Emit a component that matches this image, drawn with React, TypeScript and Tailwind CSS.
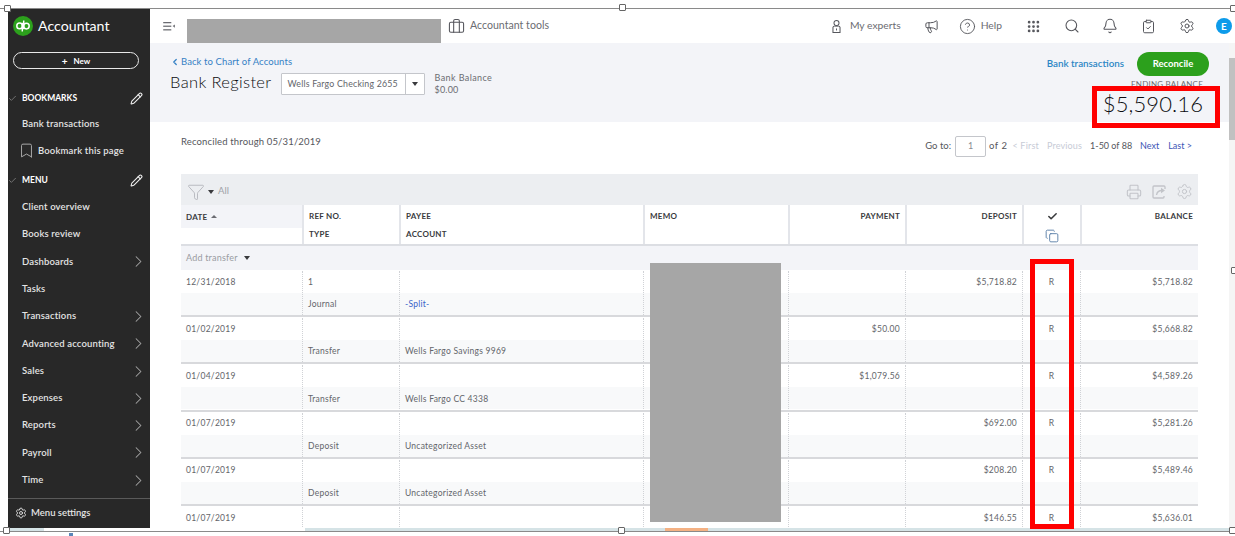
import { Bookmark, Briefcase, ChevronLeft, ChevronRight, CircleHelp, Check, ClipboardCheck, Copy, Bell, Filter, Grip, Megaphone, Pencil, Printer, Search, Settings } from "lucide-react";

const F = "font-['Lato','Noto_Sans',sans-serif]";

function Caret({ className = "" }: { className?: string }) {
  return <span className={`inline-block w-0 h-0 border-x-[3px] border-x-transparent border-t-[4px] ${className}`} />;
}

function Handle({ className }: { className: string }) {
  return <div className={`absolute w-[7px] h-[7px] bg-white border border-[#666] rounded-[1px] ${className}`} />;
}

function NavItem({ label, arrow }: { label: string; arrow?: boolean }) {
  return (
    <div className="h-[27.3px] flex items-center justify-between pl-[14px] pr-[2px] text-[9.5px] font-semibold tracking-[0.15px] text-[#e4e4e4]">
      <span>{label}</span>
      {arrow && <ChevronRight size={19} strokeWidth={1.3} className="text-[#a8a8a8]" />}
    </div>
  );
}

function Section({ label }: { label: string }) {
  return (
    <div className="h-[27px] flex items-center justify-between pr-[7px] text-[8.5px] font-bold text-white">
      <div className="flex items-center">
        <div className="w-[14px] flex justify-start">
          <Check size={9} strokeWidth={2} className="text-[#8a8a8a]" />
        </div>
        <span>{label}</span>
      </div>
      <Pencil size={13} strokeWidth={2} className="text-[#f0f0f0]" />
    </div>
  );
}

const cols = ["w-[121px]", "w-[97px]", "w-[244px]", "w-[145px]", "w-[117px]", "w-[117px]", "w-[58px]", "flex-1"];

function Cell({ i, text, cls = "", line = true }: { i: number; text?: string; cls?: string; line?: boolean }) {
  const align = i === 4 || i === 5 || i === 7 ? "justify-end" : i === 6 ? "justify-center" : "justify-start";
  return (
    <div className={`${cols[i]} shrink-0 h-full flex items-center ${align} px-[5px] ${i > 0 && line ? "border-l border-dotted border-[#d0d2d6]" : ""} ${cls}`}>
      {text}
    </div>
  );
}

type R = { d: string; ref?: string; type?: string; acct?: string; pay?: string; dep?: string; bal: string };

const rows: R[] = [
  { d: "12/31/2018", ref: "1", type: "Journal", acct: "-Split-", dep: "$5,718.82", bal: "$5,718.82" },
  { d: "01/02/2019", type: "Transfer", acct: "Wells Fargo Savings 9969", pay: "$50.00", bal: "$5,668.82" },
  { d: "01/04/2019", type: "Transfer", acct: "Wells Fargo CC 4338", pay: "$1,079.56", bal: "$4,589.26" },
  { d: "01/07/2019", type: "Deposit", acct: "Uncategorized Asset", dep: "$692.00", bal: "$5,281.26" },
  { d: "01/07/2019", type: "Deposit", acct: "Uncategorized Asset", dep: "$208.20", bal: "$5,489.46" },
];

function Row({ r }: { r: R }) {
  return (
    <div className="border-b-2 border-[#d8d9dc] h-[47.2px] text-[8.5px] tracking-[0.25px] text-[#63656a]">
      <div className="h-[23px] flex pt-[1px]">
        <Cell i={0} text={r.d} />
        <Cell i={1} text={r.ref} />
        <Cell i={2} />
        <Cell i={3} />
        <Cell i={4} text={r.pay} />
        <Cell i={5} text={r.dep} />
        <Cell i={6} text="R" />
        <Cell i={7} text={r.bal} />
      </div>
      <div className="h-[22px] flex bg-[#f8f9fa] pt-[1px]">
        <Cell i={0} />
        <Cell i={1} text={r.type} />
        <Cell i={2} text={r.acct} cls={r.acct === "-Split-" ? "text-[#3a62c9]" : ""} />
        <Cell i={3} />
        <Cell i={4} />
        <Cell i={5} />
        <Cell i={6} />
        <Cell i={7} />
      </div>
    </div>
  );
}

function HeadCell({ i, top, bottom }: { i: number; top?: React.ReactNode; bottom?: React.ReactNode }) {
  const align = i === 4 || i === 5 || i === 7 ? "items-end" : i === 6 ? "items-center" : "items-start";
  return (
    <div className={`${cols[i]} shrink-0 flex flex-col ${align} px-[5px] pt-[6px] gap-[8px] ${i > 0 ? "border-l-2 border-[#e3e5ea]" : ""}`}>
      <div className="h-[10px] flex items-center">{top}</div>
      <div className="h-[10px] flex items-center">{bottom}</div>
    </div>
  );
}

export default function App() {
  const topIcon = "text-[#55565c]";
  return (
    <div className={`relative w-[1235px] h-[536px] overflow-hidden bg-white flex flex-col ${F}`}>
      <div className="h-[9px] shrink-0 border-b border-[#8a8a8a]" />
      <div className="flex h-[519px] shrink-0 pl-[8px]">
        {/* Sidebar */}
        <aside className="w-[142px] shrink-0 bg-[#282828] flex flex-col">
          <div className="h-[34px] flex items-center pl-[5px] gap-[5px]">
            <div className="w-[20px] h-[20px] rounded-full bg-[#2ca01c] flex items-center justify-center">
              <svg viewBox="0 0 20 20" className="w-[20px] h-[20px]" fill="none" stroke="white" strokeWidth="1.5">
                <circle cx="6.6" cy="9.900" r="2.800" />
                <path d="M9.300 6.800V15.500" />
                <circle cx="13.400" cy="10.100" r="2.800" />
                <path d="M10.700 4.500V13.200" />
              </svg>
            </div>
            <span className="text-[14.200px] leading-none text-white">Accountant</span>
          </div>
          <div className="mx-[5px] mt-[9px] h-[17px] w-[126px] rounded-full border border-[#e8e8e8] flex items-center justify-center gap-[6px] text-[8px] font-bold text-white">
            <span className="text-[10px] leading-none">+</span>
            <span>New</span>
          </div>
          <div className="mt-[16px]"><Section label="BOOKMARKS" /></div>
          <div className="-mt-[2px]"><NavItem label="Bank transactions" /></div>
          <div className="h-[27.3px] flex items-center gap-[3px] pl-[10px] text-[9.5px] font-semibold tracking-[0.15px] text-[#e4e4e4]">
            <Bookmark size={17} strokeWidth={1.4} className="text-[#a8a8a8]" />
            <span>Bookmark this page</span>
          </div>
          <div className="mt-[2px]"><Section label="MENU" /></div>
          {["Client overview", "Books review"].map((l) => <NavItem key={l} label={l} />)}
          <NavItem label="Dashboards" arrow />
          <NavItem label="Tasks" />
          {["Transactions", "Advanced accounting", "Sales", "Expenses", "Reports", "Payroll", "Time"].map((l) => <NavItem key={l} label={l} arrow />)}
          <div className="mt-[4px] flex-1 border-t border-[#5a5a5a] flex items-center gap-[4px] pl-[7px] text-[9.5px] font-semibold text-[#e4e4e4]">
            <Settings size={12} strokeWidth={1.8} />
            <span>Menu settings</span>
          </div>
        </aside>

        {/* Main */}
        <main className="flex-1 min-w-0 flex flex-col">
          {/* Top bar */}
          <header className="h-[34px] shrink-0 flex items-center text-[10px] text-[#6b6c72]">
            <div className="w-[37px] pl-[13px]">
              <svg viewBox="0 0 14 10" className="w-[13px] h-[9px]" fill="#6b6c72">
                <rect x="0" y="0" width="9" height="1.400" />
                <rect x="0" y="4" width="9" height="1.400" />
                <rect x="0" y="8" width="9" height="1.400" />
                <path d="M13 2.700v3.600L10.500 4.500z" />
              </svg>
            </div>
            <div className="w-[261px]" />
            <Briefcase size={17} strokeWidth={1.5} className={topIcon} />
            <span className="ml-[5px] text-[10.6px]">Accountant tools</span>
            <div className="ml-auto flex items-center pr-[3px]">
              <svg viewBox="0 0 14 18" className="w-[11px] h-[15px] mr-[8px]" fill="none" stroke="#55565c" strokeWidth="1.300">
                <circle cx="7" cy="4.500" r="3.200" />
                <path d="M3.500 8.500 2.500 10v6.500h9V10l-1-1.500" />
                <path d="M7 11.500v2.500" />
                <path d="M4 8.500h6" />
              </svg>
              <span className="mr-[23px] text-[10.300px]">My experts</span>
              <Megaphone size={15} strokeWidth={1.6} className={`${topIcon} mr-[20px]`} />
              <CircleHelp size={17} strokeWidth={1.3} className={`${topIcon} mr-[5px]`} />
              <span className="mr-[24px] text-[10.300px]">Help</span>
              <Grip size={15} strokeWidth={2.4} className={`${topIcon} mr-[23px]`} />
              <Search size={16} strokeWidth={1.6} className={`${topIcon} mr-[22px]`} />
              <Bell size={16} strokeWidth={1.6} className={`${topIcon} mr-[23px]`} />
              <ClipboardCheck size={15} strokeWidth={1.6} className={`${topIcon} mr-[23px]`} />
              <Settings size={16} strokeWidth={1.5} className={`${topIcon} mr-[21px]`} />
              <div className="w-[16px] h-[16px] rounded-full bg-[#0d9bea] text-white text-[10px] font-bold flex items-center justify-center">E</div>
            </div>
          </header>

          {/* Content */}
          <div className="flex-1 min-h-0 flex">
            <div className="flex-1 min-w-0 flex flex-col">
              {/* Page head */}
              <div className="h-[79px] shrink-0 bg-[#f3f4f8] pl-[20px] pr-[20px] pt-[12px] flex justify-between">
                <div>
                  <div className="flex items-center text-[9.5px] leading-[14px] text-[#3581c5] tracking-[0.1px]">
                    <ChevronLeft size={10} strokeWidth={3} className="mr-[1px]" />
                    <span>Back to Chart of Accounts</span>
                  </div>
                  <div className="flex items-start mt-[1px]">
                    <span className="text-[16.500px] leading-[24px] font-light text-[#0c0d10] tracking-[0.35px]">Bank Register</span>
                    <div className="ml-[9px] mt-[3px] w-[144px] h-[22px] bg-white border border-[#c4c6cb] rounded-[1px] flex items-center text-[8.800px] text-[#63656a] tracking-[0.2px]">
                      <span className="w-[123px] pl-[6px] whitespace-nowrap">Wells Fargo Checking 2655</span>
                      <div className="flex-1 h-full border-l border-[#c4c6cb] flex items-center justify-center"><Caret className="border-t-[#393a3d]" /></div>
                    </div>
                    <div className="ml-[10px] mt-[2px] text-[9px] leading-[12px] text-[#6b6c72] tracking-[0.4px]">
                      <div>Bank Balance</div>
                      <div className="tracking-[0.2px]">$0.00</div>
                    </div>
                  </div>
                </div>
                <div className="flex flex-col items-end -mt-[3px]">
                  <div className="flex items-center">
                    <span className="text-[9.8px] font-semibold text-[#2b86c5] mr-[13px] -mt-[2px]">Bank transactions</span>
                    <div className="w-[72px] h-[24px] rounded-full bg-[#2ca01c] text-white text-[9.5px] font-bold flex items-center justify-center">Reconcile</div>
                  </div>
                  <div className="mt-[4px] mr-[6px] text-[8px] leading-[9px] text-[#6b6c72] tracking-[0.2px]">ENDING BALANCE</div>
                  <div className="mr-[6px] mt-[1px] text-[22px] leading-[28px] font-light text-[#0c0d10] tracking-[0.1px]">$5,590.16</div>
                </div>
              </div>

              {/* Register */}
              <div className="pl-[31px] pr-[31px] flex-1 min-h-0 overflow-hidden">
                <div className="h-[52px] flex items-center justify-between text-[9px] text-[#55565c]">
                  <span className="-mt-[11px] text-[9.5px] tracking-[0.15px]">Reconciled through 05/31/2019</span>
                  <div className="flex items-center -mt-[4px] mr-[6px]">
                    <span className="text-[9.5px]">Go to:</span>
                    <div className="ml-[4px] w-[31px] h-[21px] border border-[#c4c6cb] rounded-[2px] flex items-center justify-center text-[#8a8b90]">1</div>
                    <span className="ml-[3px] text-[9.5px] tracking-[0.5px]">of 2</span>
                    <span className="ml-[5px] text-[#c7cbd6] tracking-[0.2px]">&lt; First</span>
                    <span className="ml-[8px] text-[#c7cbd6] tracking-[0.15px]">Previous</span>
                    <span className="ml-[8px]">1-50 of 88</span>
                    <span className="ml-[8px] text-[#3c55b5]">Next</span>
                    <span className="ml-[9px] text-[#3c55b5]">Last &gt;</span>
                  </div>
                </div>

                <div className="w-[1017px]">
                  <div className="h-[31px] bg-[#eceef1] flex items-center justify-between pl-[6px] pr-[5px] pt-[4px] text-[9.500px] text-[#a0a2a8]">
                    <div className="flex items-center">
                      <Filter size={18} strokeWidth={1} className="text-[#a8aab0]" />
                      <Caret className="ml-[3px] mr-[4px] border-t-[#393a3d]" />
                      <span>All</span>
                    </div>
                    <div className="flex items-center gap-[9px] text-[#c2c4c9]">
                      <Printer size={16} strokeWidth={1.6} />
                      <svg viewBox="0 0 16 16" className="w-[16px] h-[16px]" fill="none" stroke="currentColor" strokeWidth="1.300">
                        <path d="M14 5V3a1 1 0 0 0-1-1H3a1 1 0 0 0-1 1v10a1 1 0 0 0 1 1h9a1 1 0 0 0 1-1v-1" />
                        <path d="M5.500 11c.5-3 2.500-4.500 5.500-4.500" />
                        <path d="M10 3.800 14 6.500 10 9.200z" fill="currentColor" stroke="none" />
                      </svg>
                      <Settings size={17} strokeWidth={1.4} />
                    </div>
                  </div>

                  <div className="h-[41px] flex text-[8px] font-bold text-[#393a3d] tracking-[0.25px] border-b-2 border-[#dcdee3]">
                    <div className="w-[121px] shrink-0">
                      <div className="h-[23px] bg-[#f3f4f8] flex items-center px-[5px] gap-[4px]">
                        <span>DATE</span>
                        <span className="inline-block w-0 h-0 border-x-[3px] border-x-transparent border-b-[3px] border-b-[#6b6c72]" />
                      </div>
                    </div>
                    <HeadCell i={1} top="REF NO." bottom="TYPE" />
                    <HeadCell i={2} top="PAYEE" bottom="ACCOUNT" />
                    <HeadCell i={3} top="MEMO" />
                    <HeadCell i={4} top="PAYMENT" />
                    <HeadCell i={5} top="DEPOSIT" />
                    <HeadCell i={6} top={<Check size={11} strokeWidth={3.4} className="text-[#393a3d]" />} bottom={<Copy size={14} strokeWidth={1.6} className="text-[#5a7fa8] mt-[3px]" />} />
                    <HeadCell i={7} top="BALANCE" />
                  </div>

                  <div className="h-[24px] bg-[#f3f4f8] flex items-center px-[5px] text-[9px] text-[#9a9ca2] tracking-[0.2px]">
                    <span>Add transfer</span>
                    <Caret className="ml-[6px] border-t-[#393a3d]" />
                  </div>

                  {rows.map((r, i) => <Row key={i} r={r} />)}
                  <div className="h-[23px] flex pt-[1px] text-[8.5px] tracking-[0.25px] text-[#63656a]">
                    <Cell i={0} text="01/07/2019" />
                    <Cell i={1} />
                    <Cell i={2} />
                    <Cell i={3} />
                    <Cell i={4} />
                    <Cell i={5} text="$146.55" />
                    <Cell i={6} text="R" />
                    <Cell i={7} text="$5,636.01" />
                  </div>
                </div>
              </div>
            </div>
            <div className="w-[6px] shrink-0 bg-[#f5f5f5] flex flex-col">
              <div className="mt-[15px] h-[82px] bg-[#c1c1c1]" />
            </div>
          </div>
        </main>
      </div>
      <div className="h-[3px] shrink-0 bg-[#d5e3e6] flex ml-[8px]">
        <div className="ml-[36px] w-[261px] bg-white" />
        <div className="ml-[360px] w-[43px] bg-[#f4b183]" />
      </div>
      <div className="h-[1px] shrink-0 bg-[#8a8a8a]" />

      {/* Redactions */}
      <div className="absolute left-[187px] top-[19px] w-[254px] h-[24px] bg-[#a6a6a6]" />
      <div className="absolute left-[650px] top-[263px] w-[131px] h-[259px] bg-[#a6a6a6]" />
      {/* Annotations */}
      <div className="absolute left-[1092px] top-[86px] w-[128px] h-[42px] border-[5px] border-[#ff0000]" />
      <div className="absolute left-[1030px] top-[259px] w-[44px] h-[270px] border-[5px] border-[#ff0000]" />
      {/* Handles */}
      <Handle className="left-[4px] top-[5px]" />
      <Handle className="left-[619px] top-[4px]" />
      <Handle className="left-[1230px] top-[5px]" />
      <Handle className="left-[1231px] top-[267px]" />
      <Handle className="left-[3px] top-[527px]" />
      <Handle className="left-[618px] top-[527px]" />
      <Handle className="left-[1229px] top-[527px]" />
      <div className="absolute left-[69px] top-[533px] w-[4px] h-[3px] bg-[#5a86b8]" />
    </div>
  );
}
